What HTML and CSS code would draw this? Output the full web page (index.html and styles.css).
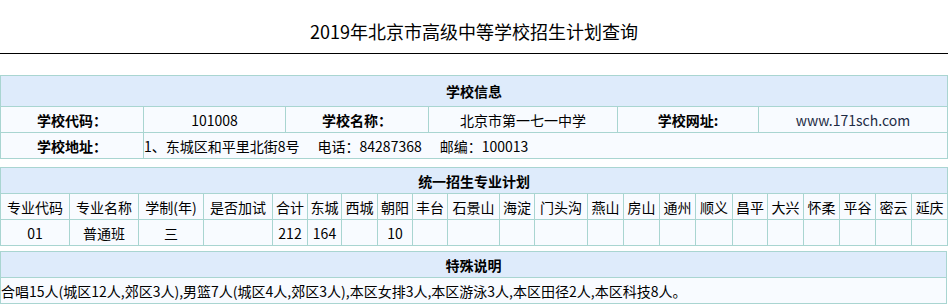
FILE: index.html
```html
<!DOCTYPE html>
<html lang="zh-CN">
<head>
<meta charset="utf-8">
<title>2019年北京市高级中等学校招生计划查询</title>
<link rel="stylesheet" href="styles.css">
</head>
<body>
<div class="title">2019年北京市高级中等学校招生计划查询</div>

<table class="grid info">
  <colgroup>
    <col class="c143"><col class="c142"><col class="c143"><col class="c189"><col class="c141"><col class="c189">
  </colgroup>
  <tr class="head tall"><th colspan="6">学校信息</th></tr>
  <tr>
    <td class="label">学校代码<span class="colon">：</span></td>
    <td>101008</td>
    <td class="label">学校名称<span class="colon">：</span></td>
    <td>北京市第一七一中学</td>
    <td class="label">学校网址:</td>
    <td class="url">www.171sch.com</td>
  </tr>
  <tr>
    <td class="label">学校地址<span class="colon">：</span></td>
    <td colspan="5" class="left"><span class="gap">1、东城区和平里北街8号</span><span class="gap">电话<span class="colon">：</span>84287368</span><span>邮编<span class="colon">：</span>100013</span></td>
  </tr>
</table>

<table class="grid plan">
  <colgroup>
    <col class="c69"><col class="c69"><col class="c65"><col class="c69">
    <col class="c35"><col class="c34"><col class="c36"><col class="c35"><col class="c35">
    <col class="c52"><col class="c35"><col class="c53"><col class="c36"><col class="c36">
    <col class="c36"><col class="c37"><col class="c35"><col class="c36"><col class="c36">
    <col class="c36"><col class="c36"><col class="c36">
  </colgroup>
  <tr class="head"><th colspan="22">统一招生专业计划</th></tr>
  <tr>
    <td>专业代码</td><td>专业名称</td><td>学制(年)</td><td>是否加试</td>
    <td>合计</td><td>东城</td><td>西城</td><td>朝阳</td><td>丰台</td>
    <td>石景山</td><td>海淀</td><td>门头沟</td><td>燕山</td><td>房山</td>
    <td>通州</td><td>顺义</td><td>昌平</td><td>大兴</td><td>怀柔</td>
    <td>平谷</td><td>密云</td><td>延庆</td>
  </tr>
  <tr>
    <td>01</td><td>普通班</td><td>三</td><td></td>
    <td>212</td><td>164</td><td></td><td>10</td><td></td>
    <td></td><td></td><td></td><td></td><td></td>
    <td></td><td></td><td></td><td></td><td></td>
    <td></td><td></td><td></td>
  </tr>
</table>

<table class="grid note">
  <tr class="head"><th>特殊说明</th></tr>
  <tr><td class="left">合唱15人(城区12人,郊区3人),男篮7人(城区4人,郊区3人),本区女排3人,本区游泳3人,本区田径2人,本区科技8人。</td></tr>
</table>
</body>
</html>
```

FILE: styles.css
```css
html, body {
  margin: 0;
  padding: 0;
  background: #fff;
}
body {
  font-family: "Noto Sans CJK SC", "Microsoft YaHei", sans-serif;
  font-size: 14px;
  color: #000;
}
.title {
  height: 54px;
  box-sizing: border-box;
  padding-top: 18px;
  line-height: 26px;
  font-size: 18px;
  text-align: center;
  border-bottom: 1px solid #000;
}
.grid {
  border-collapse: collapse;
  table-layout: fixed;
  width: 947px;
  background: #f8fbff;
}
.grid th,
.grid td {
  border: 1px solid #a9d5d1;
  padding: 0;
  height: 25px;
  line-height: 24px;
  text-align: center;
  white-space: nowrap;
  overflow: hidden;
  font-weight: normal;
}
.grid .head th {
  background: #deebfb;
  font-weight: bold;
}
.grid .tall th {
  height: 30px;
}
.grid td.label {
  font-weight: bold;
}
.grid td.left {
  text-align: left;
}
.grid td.url {
  color: #1d2b44;
}
.colon {
  font-family: "Noto Sans CJK TC", "Noto Sans CJK SC", sans-serif;
}
.gap {
  margin-right: 18px;
}
.info { margin-top: 21px; }
.plan { margin-top: 8px; }
.note { margin-top: 5px; }

.c143 { width: 143px; }
.c142 { width: 142px; }
.c189 { width: 189px; }
.c141 { width: 141px; }
.c69 { width: 69px; }
.c65 { width: 65px; }
.c52 { width: 52px; }
.c53 { width: 53px; }
.c37 { width: 37px; }
.c36 { width: 36px; }
.c35 { width: 35px; }
.c34 { width: 34px; }
```
